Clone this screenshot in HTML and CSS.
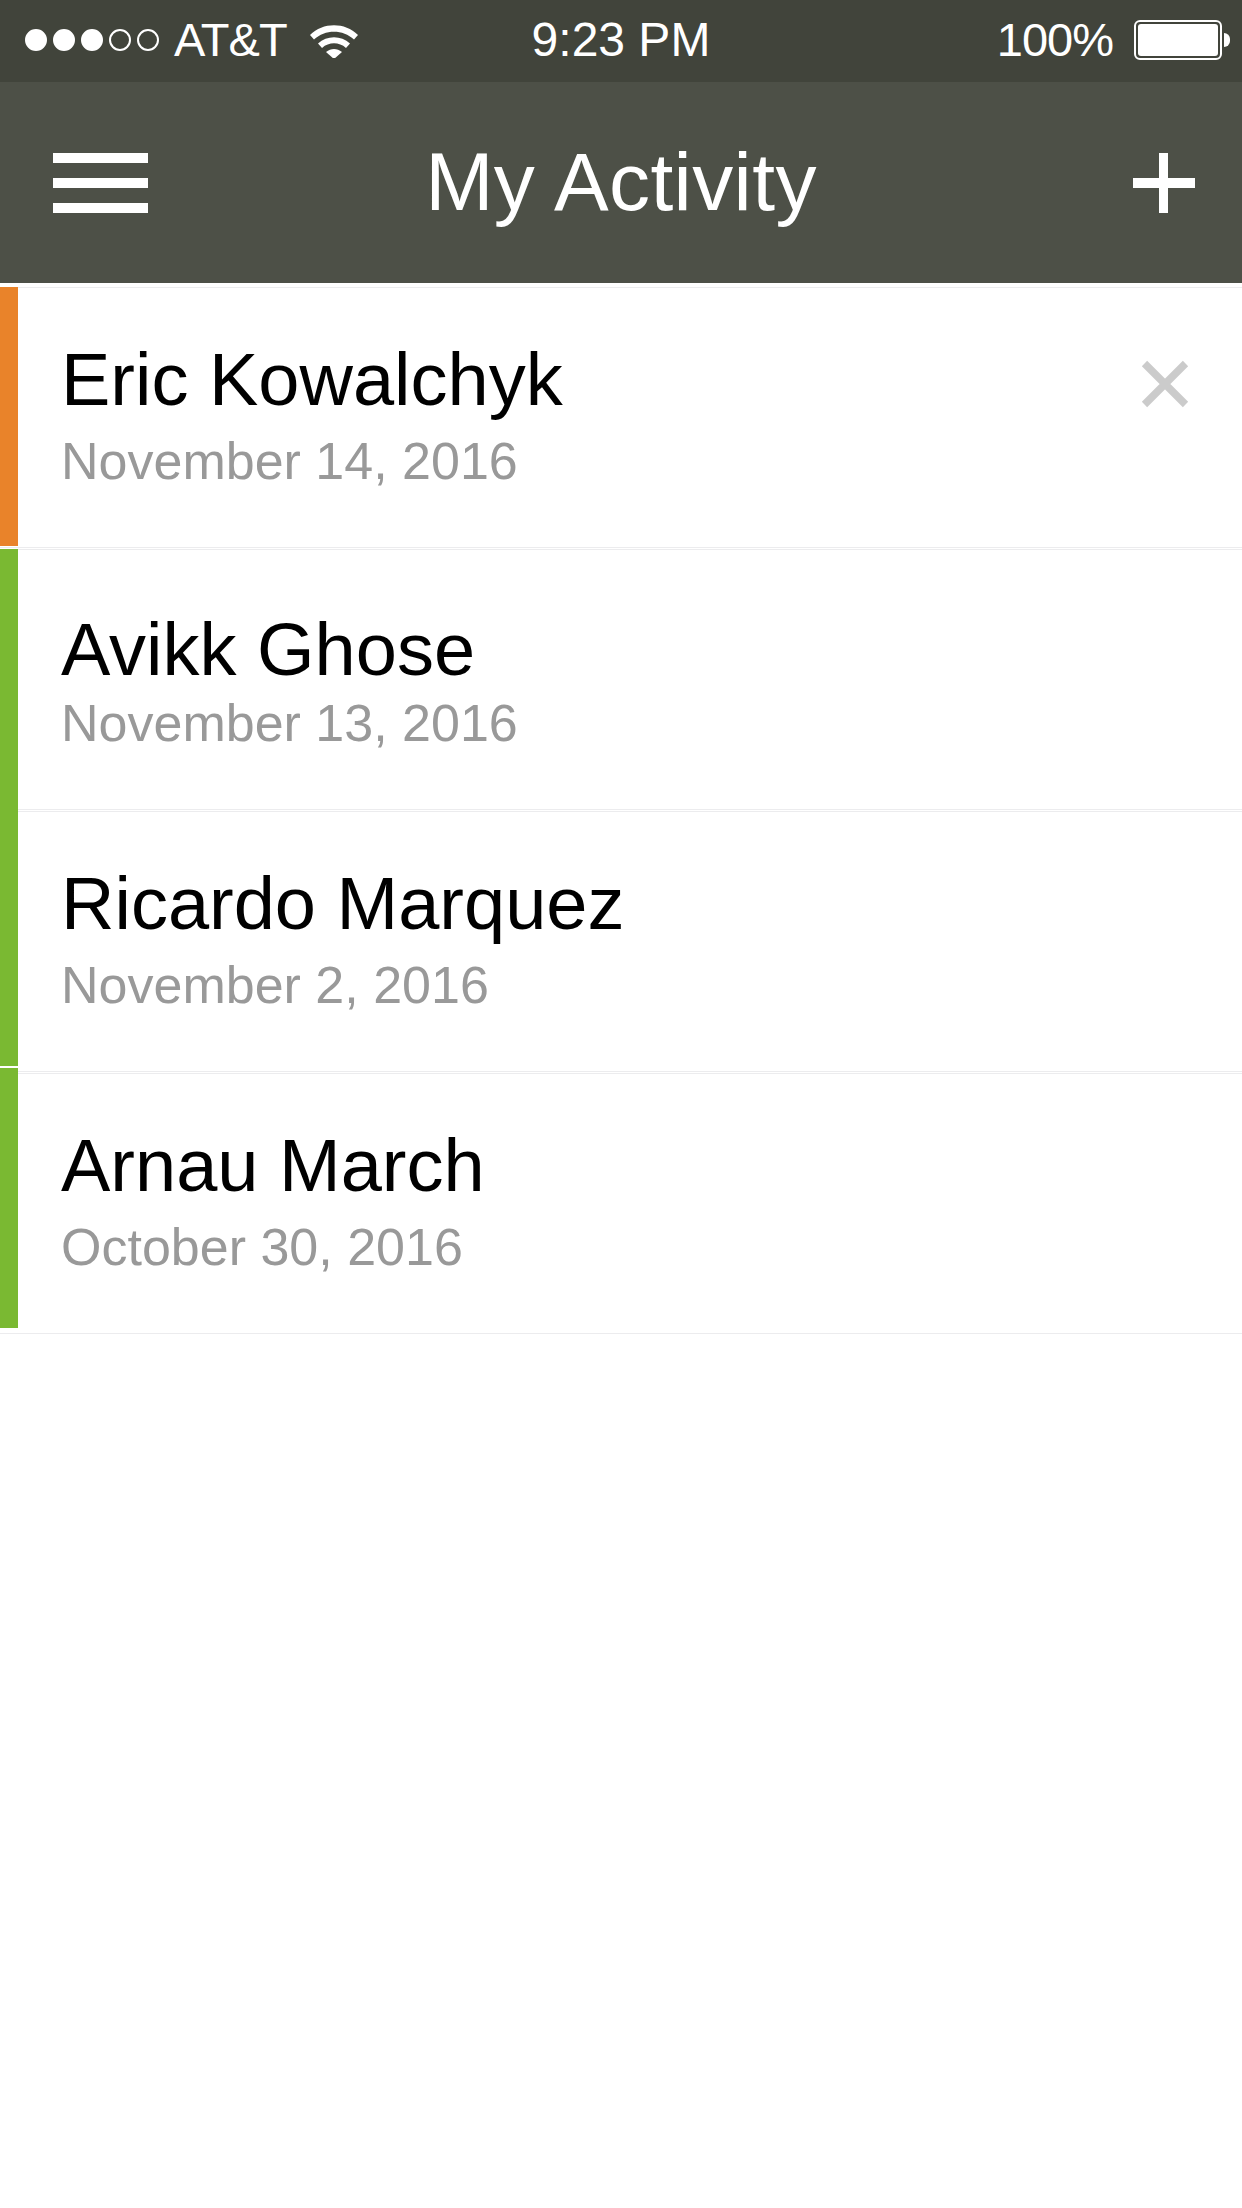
FILE: index.html
```html
<!DOCTYPE html>
<html lang="en">
<head>
  <meta charset="UTF-8" />
  <meta name="viewport" content="width=device-width, initial-scale=1.0" />
  <title>My Activity</title>
  <link rel="stylesheet" href="styles.css">
</head>
<body>
  <div class="status-bar">
    <div class="status-left">
      <span class="dot on"></span><span class="dot on"></span><span class="dot on"></span><span class="dot"></span><span class="dot"></span>
      <span class="carrier">AT&amp;T</span>
      <svg class="wifi" width="52" height="36" viewBox="0 0 52 36">
        <path d="M2 13 C15 0 37 0 50 13 L46 17.500 C35 7 17 7 6 17.500 Z" fill="#fff"/>
        <path d="M10 21.500 C19 13 33 13 42 21.500 L38 26 C31 19.800 21 19.800 14 26 Z" fill="#fff"/>
        <path d="M18 30 C23 26 29 26 34 30 L26 37 Z" fill="#fff"/>
      </svg>
    </div>
    <div class="status-time">9:23 PM</div>
    <div class="status-right">
      <span class="percent">100%</span>
      <div class="battery"><div class="battery-fill"></div></div>
      <div class="battery-tip"></div>
    </div>
  </div>

  <header class="app-header">
    <div class="menu-icon"><span></span><span></span><span></span></div>
    <h1>My Activity</h1>
    <svg class="plus-icon" width="62" height="60" viewBox="0 0 62 60">
      <rect x="0" y="25" width="62" height="10" fill="#fff"/>
      <rect x="26" y="0" width="9" height="60" fill="#fff"/>
    </svg>
  </header>

  <main class="activity-list">
    <div class="activity-row row-one">
      <div class="tag orange"></div>
      <div class="info">
        <div class="name">Eric Kowalchyk</div>
        <div class="date">November 14, 2016</div>
      </div>
      <svg class="close-icon" width="50" height="50" viewBox="0 0 50 50">
        <path d="M4.500 4.500 L45.500 45.500 M45.500 4.500 L4.500 45.500" stroke="#cbcbcb" stroke-width="7.500" fill="none"/>
      </svg>
    </div>
    <div class="activity-row row-two">
      <div class="tag green"></div>
      <div class="info">
        <div class="name">Avikk Ghose</div>
        <div class="date">November 13, 2016</div>
      </div>
    </div>
    <div class="activity-row row-three">
      <div class="tag green"></div>
      <div class="info">
        <div class="name">Ricardo Marquez</div>
        <div class="date">November 2, 2016</div>
      </div>
    </div>
    <div class="activity-row row-four">
      <div class="tag green"></div>
      <div class="info">
        <div class="name">Arnau March</div>
        <div class="date">October 30, 2016</div>
      </div>
    </div>
  </main>
</body>
</html>
```

FILE: styles.css
```css
body {
  font-family: "Liberation Sans", Arial, sans-serif;
  background: #fff;
  margin: 0;
  padding: 0;
}
.status-bar {
  height: 82px;
  background-color: #41443b;
  color: white;
  display: flex;
  align-items: center;
  justify-content: space-between;
  font-size: 47px;
  padding: 0 12px 2px 25px;
  box-sizing: border-box;
  position: relative;
}
.status-left {
  display: flex;
  align-items: center;
}
.dot {
  width: 18px;
  height: 18px;
  border: 2px solid white;
  border-radius: 50%;
  margin-right: 6px;
}
.dot.on {
  background: white;
}
.carrier {
  margin-left: 9px;
  letter-spacing: -1px;
  padding-bottom: 2px;
}
.wifi {
  margin-left: 21px;
}
.status-time {
  position: absolute;
  left: 0;
  right: 0;
  text-align: center;
  top: 12px;
  font-size: 48px;
}
.status-right {
  display: flex;
  align-items: center;
}
.percent {
  margin-right: 21px;
  letter-spacing: -1px;
  padding-bottom: 2px;
}
.battery {
  width: 88px;
  height: 40px;
  border: 2px solid white;
  border-radius: 6px;
  padding: 2px;
  box-sizing: border-box;
}
.battery-fill {
  background: white;
  height: 100%;
  border-radius: 3px;
}
.battery-tip {
  width: 6px;
  height: 14px;
  margin-left: 2px;
  background: white;
  border-radius: 0 7px 7px 0;
}
.app-header {
  height: 201px;
  background-color: #4d5047;
  color: white;
  display: flex;
  align-items: center;
  justify-content: space-between;
  padding: 0 47px 0 53px;
  box-sizing: border-box;
  position: relative;
}
.app-header h1 {
  position: absolute;
  left: 0;
  right: 0;
  margin: 0;
  padding-bottom: 2px;
  text-align: center;
  font-size: 82px;
  font-weight: normal;
  letter-spacing: 0.400px;
}
.menu-icon {
  display: flex;
  flex-direction: column;
  gap: 15px;
  width: 95px;
}
.menu-icon span {
  height: 10px;
  background: white;
}
.activity-list {
  padding-top: 4px;
}
.activity-row {
  display: flex;
  align-items: flex-start;
  height: 259px;
  margin-bottom: 1px;
  border-top: 1px solid #ececee;
  border-bottom: 1px solid #ececee;
}
.tag {
  width: 18px;
  height: 258px;
  flex-shrink: 0;
}
.tag.orange {
  background-color: #e9832a;
}
.tag.green {
  background-color: #7ab932;
}
.row-one .tag {
  margin-top: -1px;
  height: 259px;
}
.row-two .tag {
  margin-top: -1px;
  height: 259px;
}
.row-three .tag {
  margin-top: -4px;
}
.row-four .tag {
  margin-top: -6px;
  height: 260px;
}
.info {
  flex: 1;
  margin-left: 43px;
  padding-top: 47px;
}
.name {
  font-size: 74px;
  line-height: 90px;
  color: #000;
}
.date {
  font-size: 52px;
  line-height: 60px;
  color: #999;
  margin-top: 6px;
}
.row-two .name {
  margin-top: 8px;
}
.row-two .date {
  margin-top: -2px;
}
.close-icon {
  margin: 71px 52px 0 0;
}
```
